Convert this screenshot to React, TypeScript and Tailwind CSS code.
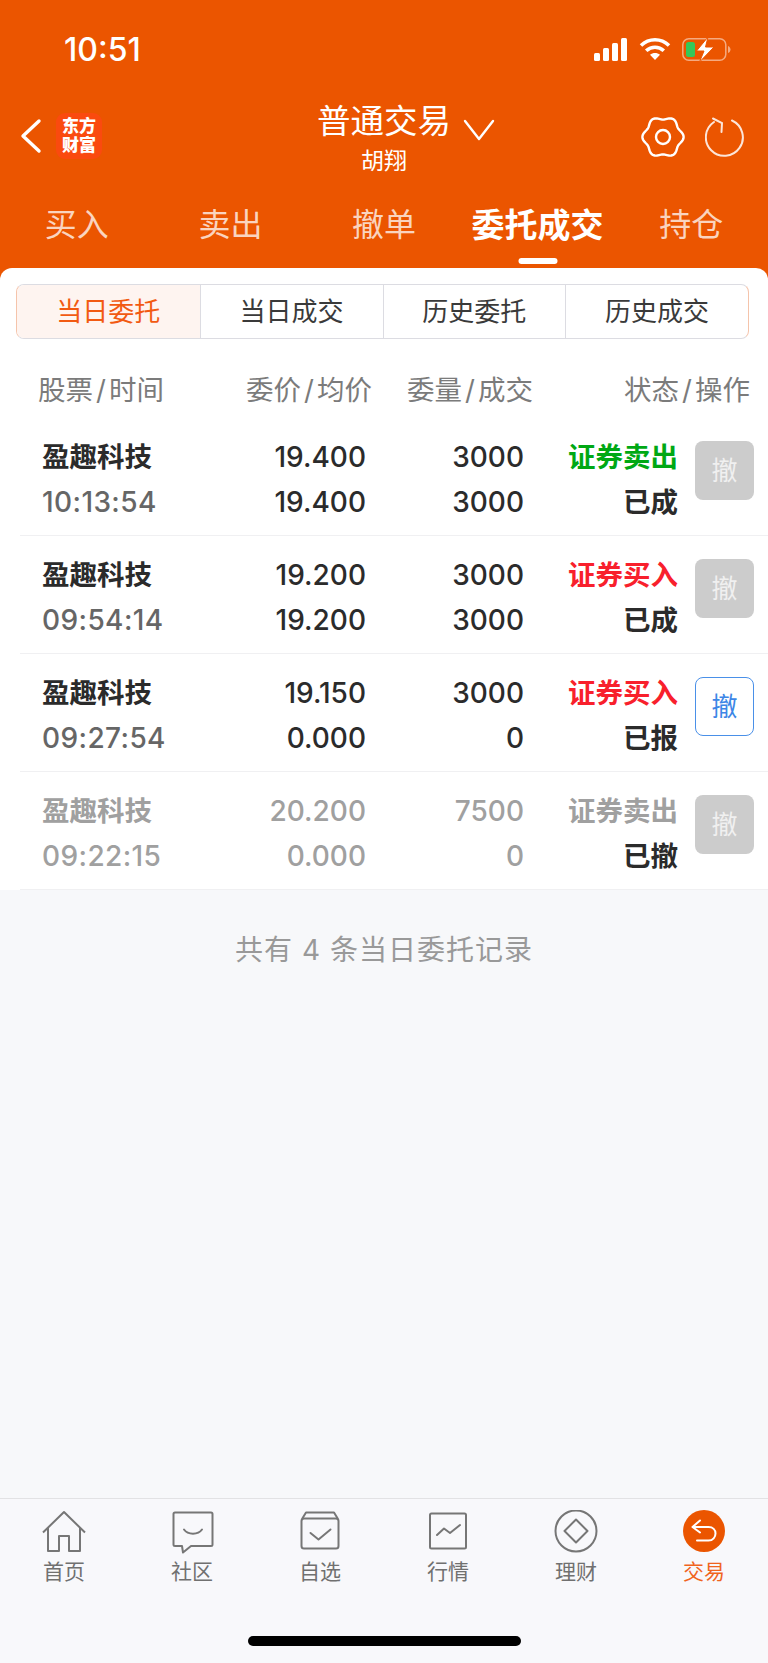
import React from "react";

const font = "font-['Inter','Noto_Sans_CJK_SC',sans-serif]";

const segments = ["当日委托", "当日成交", "历史委托", "历史成交"];
const topTabs = ["买入", "卖出", "撤单", "委托成交", "持仓"];
const columns = [
  ["股票", "时间"],
  ["委价", "均价"],
  ["委量", "成交"],
  ["状态", "操作"],
];

type Order = {
  name: string;
  time: string;
  price: string;
  avg: string;
  qty: string;
  done: string;
  side: string;
  status: string;
  sideColor: string;
  muted?: boolean;
  canCancel?: boolean;
};

const orders: Order[] = [
  { name: "盈趣科技", time: "10:13:54", price: "19.400", avg: "19.400", qty: "3000", done: "3000", side: "证券卖出", status: "已成", sideColor: "text-[#00a814]" },
  { name: "盈趣科技", time: "09:54:14", price: "19.200", avg: "19.200", qty: "3000", done: "3000", side: "证券买入", status: "已成", sideColor: "text-[#f8202c]" },
  { name: "盈趣科技", time: "09:27:54", price: "19.150", avg: "0.000", qty: "3000", done: "0", side: "证券买入", status: "已报", sideColor: "text-[#f8202c]", canCancel: true },
  { name: "盈趣科技", time: "09:22:15", price: "20.200", avg: "0.000", qty: "7500", done: "0", side: "证券卖出", status: "已撤", sideColor: "text-[#a0a0a0]", muted: true },
];

// wavy six-lobed outline for the settings gear
function gearPath(cx: number, cy: number) {
  const pts: string[] = [];
  for (let i = 0; i < 120; i++) {
    const a = (i / 120) * Math.PI * 2;
    const r = 19 + 1.6 * Math.cos(6 * a);
    pts.push(`${(cx + r * Math.cos(a)).toFixed(2)} ${(cy + r * Math.sin(a)).toFixed(2)}`);
  }
  return `M${pts.join("L")}Z`;
}

function StatusIcons() {
  return (
    <div className="flex items-center gap-[11px]">
      <svg width="34" height="23" viewBox="0 0 34 23" fill="#fff">
        <rect x="0" y="15" width="6" height="8" rx="1.5" />
        <rect x="9" y="10" width="6" height="13" rx="1.5" />
        <rect x="18" y="5" width="6" height="18" rx="1.5" />
        <rect x="27" y="0" width="6" height="23" rx="1.5" />
      </svg>
      <svg width="32" height="24" viewBox="0 0 32 24" fill="none" stroke="#fff" strokeWidth="3.6">
        <path d="M2 8.500c8-7.600 20-7.600 28 0" />
        <path d="M7.200 13.800c5.200-4.800 12.400-4.800 17.600 0" />
        <path d="M16 23l-5-5.200c2.900-2.300 7.100-2.300 10 0z" fill="#fff" stroke="none" />
      </svg>
      <svg width="49" height="25" viewBox="0 0 49 25" fill="none">
        <rect x="0.800" y="1.800" width="43" height="21.500" rx="6" stroke="#fff" strokeOpacity="0.5" strokeWidth="1.500" />
        <rect x="4" y="5" width="9" height="15" rx="2.500" fill="#34c759" />
        <path d="M46 9v7c1.500-.5 2.500-2 2.500-3.500S47.500 9.500 46 9z" fill="#fff" fillOpacity="0.5" />
        <path d="M26 0L14.500 14h7.500l-4.500 11L32 10h-8.500L26 0z" fill="#fff" stroke="#eb5500" strokeWidth="1" />
      </svg>
    </div>
  );
}

function GearIcon() {
  return (
    <svg width="44" height="42" viewBox="0 0 44 42" fill="none" stroke="#fff" strokeWidth="2.400" strokeLinejoin="round">
      <path d={gearPath(22, 21)} />
      <circle cx="22" cy="21" r="7" />
    </svg>
  );
}

function ReloadIcon() {
  return (
    <svg width="40" height="40" viewBox="0 0 40 40" fill="none" stroke="#fff" strokeOpacity="0.85" strokeWidth="2" strokeLinecap="round">
      <path d="M27 3.500A18.500 18.500 0 1 1 9 5" />
      <path d="M8 1.500l9 4.500-.5 9" />
    </svg>
  );
}

function NavIcon({ kind }: { kind: string }) {
  const stroke = "#767676";
  if (kind === "home") {
    return (
      <svg width="44" height="44" viewBox="0 0 44 44" fill="none" stroke={stroke} strokeWidth="2" strokeLinejoin="round">
        <path d="M1 22.500L22 2l21 20.500" />
        <path d="M6 18v23h11V26h10v15h11V18" />
      </svg>
    );
  }
  if (kind === "chat") {
    return (
      <svg width="44" height="44" viewBox="0 0 44 44" fill="none" stroke={stroke} strokeWidth="2" strokeLinejoin="round">
        <path d="M5 2.500h36a1.500 1.500 0 0 1 1.500 1.500v30.500a1.500 1.500 0 0 1-1.500 1.500H21l-8 6.500-1-6.500H5a1.500 1.500 0 0 1-1.500-1.500V4A1.500 1.500 0 0 1 5 2.500z" />
        <path d="M14 19.500c4 5.500 14 5.500 18 0" strokeLinecap="round" />
      </svg>
    );
  }
  if (kind === "box") {
    return (
      <svg width="44" height="44" viewBox="0 0 44 44" fill="none" stroke={stroke} strokeWidth="2" strokeLinejoin="round">
        <path d="M4 9l4-6.500h28L40 9" />
        <rect x="3.500" y="8.500" width="37" height="30" rx="2.500" />
        <path d="M12.500 23l8 6.500 12-10" strokeLinecap="round" />
      </svg>
    );
  }
  if (kind === "chart") {
    return (
      <svg width="44" height="44" viewBox="0 0 44 44" fill="none" stroke={stroke} strokeWidth="2" strokeLinejoin="round">
        <rect x="4" y="3.500" width="36" height="35" rx="1.500" />
        <path d="M11 25l7-6.500 6 4.500 10-8" strokeLinecap="round" />
      </svg>
    );
  }
  if (kind === "diamond") {
    return (
      <svg width="44" height="44" viewBox="0 0 44 44" fill="none" stroke={stroke} strokeWidth="2" strokeLinejoin="round">
        <circle cx="22" cy="21" r="20.500" />
        <path d="M22 9.500L33.500 21 22 32.500 10.500 21z" />
      </svg>
    );
  }
  return (
    <svg width="44" height="44" viewBox="0 0 44 44" fill="none">
      <circle cx="22" cy="21" r="21" fill="#eb5500" />
      <path d="M18 10.500l-7.500 6.500 7.500 5.500" stroke="#fff" strokeWidth="2" strokeLinecap="round" strokeLinejoin="round" />
      <path d="M11 17h15.500c4.500 0 7 3 7 6.500s-2.500 7-7 7H15" stroke="#fff" strokeWidth="2" strokeLinecap="round" />
    </svg>
  );
}

function OrderRow({ order }: { order: Order }) {
  const dark = order.muted ? "text-[#a0a0a0]" : "text-[#2b2b2b]";
  return (
    <div className="ml-[20px] flex h-[118px] items-start justify-between border-b border-[#f0f0f2] pt-[17px]">
      <div className="grid grid-cols-[150px_196px_158px_154px] text-[28px] leading-[45px]">
        <div className="pl-[22px]">
          <div className={`whitespace-nowrap text-[27.500px] font-semibold ${dark}`}>{order.name}</div>
          <div className={`whitespace-nowrap font-medium tracking-[0.4px] ${order.muted ? "text-[#a0a0a0]" : "text-[#666666]"}`}>{order.time}</div>
        </div>
        <div className={`text-right font-medium ${dark}`}>
          <div>{order.price}</div>
          <div>{order.avg}</div>
        </div>
        <div className={`text-right font-medium ${dark}`}>
          <div>{order.qty}</div>
          <div>{order.done}</div>
        </div>
        <div className="text-right text-[27.500px] font-semibold">
          <div className={order.sideColor}>{order.side}</div>
          <div className="text-[#2b2b2b]">{order.status}</div>
        </div>
      </div>
      <div
        className={`mr-[14px] mt-[6px] flex h-[59px] w-[59px] items-center justify-center rounded-[8px] text-[26px] ${
          order.canCancel
            ? "border border-[#4a90e8] bg-white text-[#3d86e6]"
            : "bg-[#cccccc] text-[#f0f0f0]"
        }`}
      >
        撤
      </div>
    </div>
  );
}

export default function App() {
  const navItems = [
    { kind: "home", label: "首页" },
    { kind: "chat", label: "社区" },
    { kind: "box", label: "自选" },
    { kind: "chart", label: "行情" },
    { kind: "diamond", label: "理财" },
    { kind: "trade", label: "交易" },
  ];

  return (
    <div className={`flex h-[1663px] w-[768px] flex-col overflow-hidden bg-[#f7f8fa] ${font}`}>
      <header className="h-[280px] shrink-0 bg-[#eb5500] text-white">
        <div className="flex h-[98px] items-center justify-between pl-[64px] pr-[37px]">
          <span className="pt-[2px] text-[32px] font-medium">10:51</span>
          <StatusIcons />
        </div>
        <div className="grid h-[86px] grid-cols-[1fr_auto_1fr] items-start">
          <div className="flex items-center pl-[20px] pt-[15px]">
            <svg width="22" height="36" viewBox="0 0 22 36" fill="none" stroke="#fff" strokeWidth="3.400" strokeLinecap="round" strokeLinejoin="round">
              <path d="M19 3L3 18l16 15" />
            </svg>
            <div className="ml-[14px] flex h-[46px] w-[46px] flex-col items-center justify-center rounded-[9px] bg-[#fa4a0f] text-[17px] font-black leading-[19px]">
              <span>东方</span>
              <span>财富</span>
            </div>
          </div>
          <div className="relative flex flex-col items-center">
            <span className="text-[33.500px] leading-[46px]">普通交易</span>
            <span className="text-[23px] leading-[34px]">胡翔</span>
            <svg className="absolute left-[146px] top-[21px]" width="32" height="22" viewBox="0 0 32 22" fill="none" stroke="#fff" strokeWidth="2.400" strokeLinecap="round" strokeLinejoin="round">
              <path d="M2 2l14 18L30 2" />
            </svg>
          </div>
          <div className="flex items-center justify-end gap-[20px] pr-[23px] pt-[18px]">
            <GearIcon />
            <ReloadIcon />
          </div>
        </div>
        <nav className="grid h-[84px] grid-cols-5">
          {topTabs.map((tab) => (
            <div key={tab} className="relative pt-[15px] text-center">
              <span className={tab === "委托成交" ? "text-[33px] font-semibold leading-[52px]" : "text-[32px] leading-[52px] text-white/75"}>
                {tab}
              </span>
              {tab === "委托成交" && (
                <div className="absolute bottom-[4px] left-1/2 h-[6px] w-[39px] -translate-x-1/2 rounded-full bg-white" />
              )}
            </div>
          ))}
        </nav>
      </header>

      <main className="-mt-[12px] flex flex-1 flex-col">
        <section className="rounded-t-[12px] bg-white pt-[16px]">
          <div className="ml-[16px] mr-[19px] grid h-[55px] grid-cols-4 overflow-hidden rounded-[8px] border border-[#dcdce2] border-l-[#f5c4ab] border-r-[#f5c4ab]">
            {segments.map((seg, i) => (
              <div
                key={seg}
                className={`flex items-center justify-center text-[26px] ${i > 0 ? "border-l border-[#dcdce2]" : ""} ${
                  i === 0 ? "bg-[#fef4f0] text-[#f25a12]" : "text-[#3a3a3a]"
                }`}
              >
                {seg}
              </div>
            ))}
          </div>
          <div className="grid h-[79px] grid-cols-[38px_126px_208px_161px_1fr] pr-[18px] pt-[31px] text-[27.500px] leading-[40px] text-[#7b7b7b]">
            <span />
            {columns.map(([a, b], i) => (
              <span key={a} className={`whitespace-nowrap ${i > 0 ? "text-right" : ""}`}>
                {a}
                <span className="mx-[3px]">/</span>
                {b}
              </span>
            ))}
          </div>
          <div>
            {orders.map((order) => (
              <OrderRow key={order.time} order={order} />
            ))}
          </div>
        </section>
        <p className="pt-[40px] text-center text-[28px] leading-[40px] tracking-[1px] text-[#999999]">共有 4 条当日委托记录</p>
      </main>

      <footer className="relative h-[165px] shrink-0 border-t border-[#e2e2e4] bg-[#f8f8fb] pt-[11px]">
        <div className="grid grid-cols-6">
          {navItems.map((item) => (
            <div key={item.label} className="flex flex-col items-center">
              <NavIcon kind={item.kind} />
              <span className={`mt-[3px] text-[21px] leading-[30px] ${item.kind === "trade" ? "text-[#f0641e]" : "text-[#707070]"}`}>
                {item.label}
              </span>
            </div>
          ))}
        </div>
        <div className="absolute bottom-[17px] left-[248px] h-[10px] w-[273px] rounded-full bg-black" />
      </footer>
    </div>
  );
}
